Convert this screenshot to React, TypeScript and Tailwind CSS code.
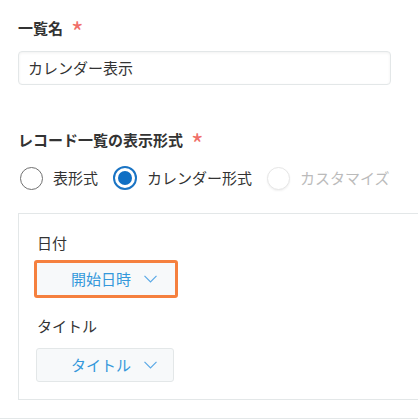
import { ReactNode } from "react";

const font = {
  fontFamily: '"Noto Sans CJK JP", "Noto Sans", sans-serif',
};

const Required = () => (
  <span className="ml-2 h-5 text-[27px] font-normal leading-[28px] text-[#f0706a]">*</span>
);

const Heading = ({ children }: { children: ReactNode }) => (
  <h2 className="flex h-5 items-start text-[15px] font-bold leading-5 text-[#333]">
    {children}
    <Required />
  </h2>
);

const Chevron = () => (
  <svg width="13" height="8" viewBox="0 0 13 8" fill="none" className="ml-[13px]">
    <path d="M0.5 0.8 L6.5 6.8 L12.5 0.8" stroke="#5aa9e6" strokeWidth="1.2" />
  </svg>
);

const Radio = ({
  label,
  checked,
  disabled,
}: {
  label: string;
  checked?: boolean;
  disabled?: boolean;
}) => (
  <label className="flex items-center">
    {checked ? (
      <span className="flex h-6 w-6 items-center justify-center rounded-full border-2 border-[#1a74c4] bg-white">
        <span className="h-[14px] w-[14px] rounded-full bg-[#0f6fc4]" />
      </span>
    ) : disabled ? (
      <span className="h-[23px] w-[23px] rounded-full border border-[#e6e6e6] bg-white shadow-[0_1px_2px_rgba(0,0,0,0.06)]" />
    ) : (
      <span className="h-[23px] w-[23px] rounded-full border-[1.5px] border-[#707070] bg-white" />
    )}
    <span
      className={`ml-[10px] text-[15px] leading-5 ${
        disabled ? "text-[#bbbbbb]" : "text-[#333]"
      }`}
    >
      {label}
    </span>
  </label>
);

const SelectButton = ({ value, focused }: { value: string; focused?: boolean }) => (
  <div
    className={
      focused
        ? "-ml-[3px] flex h-[38px] w-[144px] items-center rounded-[3px] border-[3px] border-[#f5803e] bg-[#f7f9fa] pl-[34px]"
        : "-ml-px flex h-[34px] w-[138px] items-center rounded-[3px] border border-[#e3e7e8] bg-[#f7f9fa] pl-[34px]"
    }
  >
    <span className="text-[15px] leading-5 text-[#3498db]">{value}</span>
    <Chevron />
  </div>
);

export default function App() {
  return (
    <div className="h-[420px] w-[418px] overflow-hidden bg-white" style={font}>
      <div className="pl-[18px] pt-[18px]">
        <Heading>一覧名</Heading>
        <div className="mt-[13px] flex h-[34px] w-[373px] items-center rounded-[4px] border border-[#e3e7e8] pl-[9px] shadow-[inset_0_1px_3px_rgba(0,0,0,0.06)]">
          <span className="text-[15px] text-[#333]">カレンダー表示</span>
        </div>

        <div className="mt-[45px]">
          <Heading>レコード一覧の表示形式</Heading>
        </div>
        <div className="mt-4 flex h-6 items-center gap-[15px] pl-[2px]">
          <Radio label="表形式" />
          <Radio label="カレンダー形式" checked />
          <Radio label="カスタマイズ" disabled />
        </div>

        <section className="mt-[23px] w-[420px] border border-[#e3e7e8] pb-[17px] pl-[18px] pt-[19px]">
          <p className="text-[15px] leading-5 text-[#333]">日付</p>
          <div className="mt-[7px]">
            <SelectButton value="開始日時" focused />
          </div>
          <p className="mt-[18px] text-[15px] leading-5 text-[#333]">タイトル</p>
          <div className="mt-[12px]">
            <SelectButton value="タイトル" />
          </div>
        </section>
      </div>
      <div className="mt-[18px] border-t border-[#e3e7e8]" />
    </div>
  );
}
